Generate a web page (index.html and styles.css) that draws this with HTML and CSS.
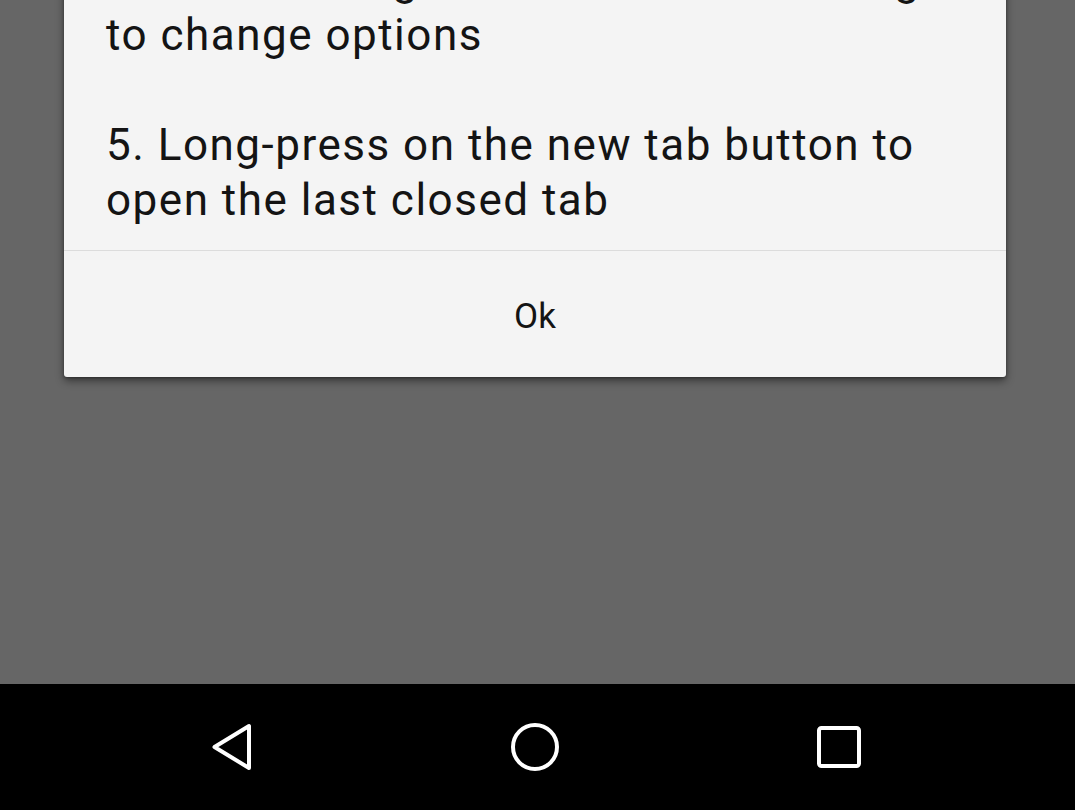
FILE: index.html
```html
<!DOCTYPE html>
<html lang="en">
<head>
<meta charset="utf-8">
<title>Tips</title>
<link rel="stylesheet" href="styles.css">
</head>
<body>
<div class="screen">
  <main class="scrim">
    <section class="dialog">
      <div class="dialog-body">
        <p class="tip">4. Use the long tab bar whilst browsing to change options</p>
        <p class="tip">5. Long-press on the new tab button to open the last closed tab</p>
      </div>
      <div class="dialog-actions">
        <button class="action">Ok</button>
      </div>
    </section>
  </main>
  <nav class="navbar">
    <svg class="nav-icon" viewBox="0 0 60 60" width="60" height="60" aria-label="Back">
      <path d="M13.5 30 L48 9 L48 51 Z" fill="none" stroke="#fff" stroke-width="4" stroke-linejoin="round"/>
    </svg>
    <svg class="nav-icon" viewBox="0 0 60 60" width="60" height="60" aria-label="Home">
      <circle cx="30" cy="30" r="22" fill="none" stroke="#fff" stroke-width="4"/>
    </svg>
    <svg class="nav-icon" viewBox="0 0 60 60" width="60" height="60" aria-label="Recents">
      <rect x="10" y="11" width="40" height="38" rx="2.5" fill="none" stroke="#fff" stroke-width="4"/>
    </svg>
  </nav>
</div>
</body>
</html>
```

FILE: styles.css
```css
* { box-sizing: border-box; }
html, body {
  margin: 0;
  padding: 0;
  background: #656565;
}
.screen {
  width: 1075px;
  height: 810px;
  display: flex;
  flex-direction: column;
  overflow: hidden;
  font-family: Roboto, "Noto Sans", sans-serif;
}
.scrim {
  flex: 0 0 684px;
  background: #666666;
  overflow: hidden;
}
.dialog {
  margin-top: -71px;
  margin-left: 64px;
  width: 942px;
  background: #f4f4f4;
  border-radius: 3px;
  box-shadow: 0 4px 8px rgba(0, 0, 0, 0.45), 0 1px 3px rgba(0, 0, 0, 0.3);
}
.dialog-body {
  padding: 24px 38px 22px 42px;
  display: flex;
  flex-direction: column;
  gap: 55px;
}
.tip {
  margin: 0;
  font-size: 44px;
  letter-spacing: 1.5px;
  line-height: 55px;
  color: #141414;
}
.dialog-actions {
  border-top: 1px solid #dcdcdc;
  height: 127px;
  display: flex;
  align-items: center;
  justify-content: center;
  padding-top: 4px;
}
.action {
  background: none;
  border: none;
  padding: 0;
  font-family: Roboto, "Noto Sans", sans-serif;
  font-size: 35px;
  color: #141414;
}
.navbar {
  flex: 0 0 126px;
  background: #000;
  display: flex;
  align-items: center;
  justify-content: center;
  gap: 244px;
  padding-right: 5px;
}
.nav-icon {
  display: block;
}
```
